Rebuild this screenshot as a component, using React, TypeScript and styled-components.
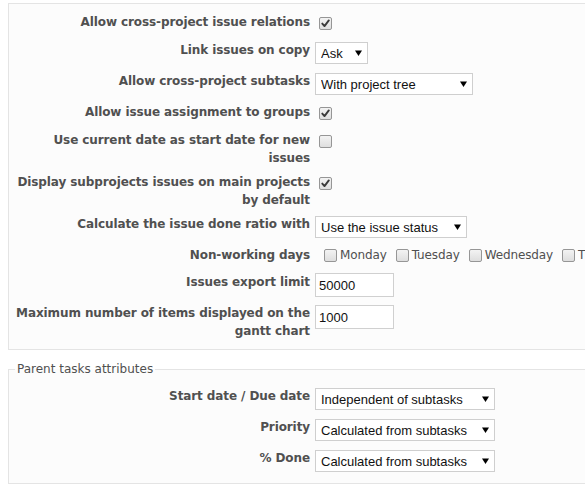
import React from "react";
import styled, { createGlobalStyle } from "styled-components";

const GlobalStyle = createGlobalStyle`
  html, body {
    margin: 0;
    padding: 0;
    background: #ffffff;
    overflow: hidden;
  }
  body {
    font-family: "DejaVu Sans", Verdana, sans-serif;
    font-size: 12px;
    color: #505050;
  }
`;

const Page = styled.div`
  padding: 3px 0 0 8px;
  width: 720px;
`;

const Box = styled.div`
  width: 640px;
  background: #fcfcfc;
  border: 1px solid #e4e4e4;
  padding: 6px;
  margin-bottom: 10px;
`;

const FieldBox = styled.fieldset`
  width: 640px;
  min-width: 0;
  margin: 0;
  padding: 6px;
  background: #fcfcfc;
  border: 1px solid #e4e4e4;
`;

const Legend = styled.legend`
  padding: 0 2px;
  font-size: 12px;
  line-height: 18px;
  color: #505050;
`;

const Row = styled.div<{ $h: number }>`
  display: grid;
  grid-template-columns: 295px auto;
  column-gap: 5px;
  align-items: start;
  padding: 3px 0;
  min-height: ${(p) => p.$h}px;
`;

const Label = styled.label`
  font-weight: bold;
  text-align: right;
  line-height: 18px;
  letter-spacing: -0.1px;
  color: #505050;
`;

const Field = styled.div<{ $offset: number }>`
  display: flex;
  align-items: center;
  padding-top: ${(p) => p.$offset}px;
`;

const CheckBox = styled.span<{ $ml: number }>`
  display: inline-flex;
  align-items: center;
  justify-content: center;
  box-sizing: border-box;
  width: 13px;
  height: 13px;
  margin-left: ${(p) => p.$ml}px;
  border: 1px solid #969696;
  border-radius: 2px;
  background: linear-gradient(#f3f3f3, #dedede);
  flex: none;
`;

const DayItem = styled.span`
  display: inline-flex;
  align-items: center;
  margin-left: 9px;
  white-space: nowrap;
`;

const DayText = styled.span`
  margin-left: 3px;
  line-height: 13px;
  letter-spacing: -0.12px;
  color: #505050;
`;

const SelectWrap = styled.span<{ $w: number }>`
  position: relative;
  display: inline-block;
  width: ${(p) => p.$w}px;
  height: 22px;
`;

const SelectEl = styled.select`
  appearance: none;
  -webkit-appearance: none;
  display: block;
  box-sizing: border-box;
  width: 100%;
  height: 100%;
  margin: 0;
  padding: 0 0 0 5px;
  border: 1px solid #cfcfcf;
  border-radius: 0;
  background: #ffffff;
  font-family: "Liberation Sans", Arial, sans-serif;
  font-size: 13px;
  color: #111111;
  outline: none;
`;

const Arrow = styled.svg`
  position: absolute;
  right: 6px;
  top: 50%;
  margin-top: -3px;
  pointer-events: none;
`;

const TextInput = styled.input`
  box-sizing: border-box;
  width: 79px;
  height: 24px;
  margin: 0;
  padding: 0 3px;
  border: 1px solid #d0d0d0;
  border-radius: 0;
  background: #ffffff;
  font-family: "Liberation Sans", Arial, sans-serif;
  font-size: 13px;
  color: #111111;
  outline: none;
`;

function Check({ checked, ml = 4 }: { checked?: boolean; ml?: number }) {
  return (
    <CheckBox $ml={ml}>
      {checked && (
        <svg width="9" height="9" viewBox="0 0 9 9">
          <path
            d="M1.3 4.6 L3.5 7.1 L7.8 1.4"
            fill="none"
            stroke="#3a3a3a"
            strokeWidth="1.9"
            strokeLinecap="round"
            strokeLinejoin="round"
          />
        </svg>
      )}
    </CheckBox>
  );
}

function Select({ value, width }: { value: string; width: number }) {
  return (
    <SelectWrap $w={width}>
      <SelectEl defaultValue={value}>
        <option value={value}>{value}</option>
      </SelectEl>
      <Arrow width="7" height="6" viewBox="0 0 7 6">
        <polygon points="0,0.5 7,0.5 3.5,6" fill="#000" />
      </Arrow>
    </SelectWrap>
  );
}

type Kind =
  | { type: "check"; checked: boolean }
  | { type: "select"; value: string; width: number }
  | { type: "days" }
  | { type: "input"; value: string };

interface RowDef {
  label: string;
  h: number;
  offset: number;
  kind: Kind;
}

const mainRows: RowDef[] = [
  { label: "Allow cross-project issue relations", h: 22, offset: 4, kind: { type: "check", checked: true } },
  { label: "Link issues on copy", h: 25, offset: 1, kind: { type: "select", value: "Ask", width: 53 } },
  { label: "Allow cross-project subtasks", h: 25, offset: 1, kind: { type: "select", value: "With project tree", width: 158 } },
  { label: "Allow issue assignment to groups", h: 22, offset: 4, kind: { type: "check", checked: true } },
  { label: "Use current date as start date for new issues", h: 36, offset: 4, kind: { type: "check", checked: false } },
  { label: "Display subprojects issues on main projects by default", h: 36, offset: 4, kind: { type: "check", checked: true } },
  { label: "Calculate the issue done ratio with", h: 25, offset: 1, kind: { type: "select", value: "Use the issue status", width: 152 } },
  { label: "Non-working days", h: 21, offset: 3, kind: { type: "days" } },
  { label: "Issues export limit", h: 25, offset: 0, kind: { type: "input", value: "50000" } },
  { label: "Maximum number of items displayed on the gantt chart", h: 36, offset: 1, kind: { type: "input", value: "1000" } },
];

const parentRows: RowDef[] = [
  { label: "Start date / Due date", h: 25, offset: 1, kind: { type: "select", value: "Independent of subtasks", width: 180 } },
  { label: "Priority", h: 25, offset: 1, kind: { type: "select", value: "Calculated from subtasks", width: 180 } },
  { label: "% Done", h: 25, offset: 1, kind: { type: "select", value: "Calculated from subtasks", width: 180 } },
];

const days = ["Monday", "Tuesday", "Wednesday", "Thursday", "Friday", "Saturday", "Sunday"];

function Control({ kind }: { kind: Kind }) {
  switch (kind.type) {
    case "check":
      return <Check checked={kind.checked} />;
    case "select":
      return <Select value={kind.value} width={kind.width} />;
    case "input":
      return <TextInput type="text" defaultValue={kind.value} />;
    case "days":
      return (
        <>
          {days.map((d) => (
            <DayItem key={d}>
              <Check ml={0} />
              <DayText>{d}</DayText>
            </DayItem>
          ))}
        </>
      );
  }
}

function SettingRow({ row }: { row: RowDef }) {
  return (
    <Row $h={row.h}>
      <Label>{row.label}</Label>
      <Field $offset={row.offset}>
        <Control kind={row.kind} />
      </Field>
    </Row>
  );
}

export default function App() {
  return (
    <>
      <GlobalStyle />
      <Page>
        <Box>
          {mainRows.map((r) => (
            <SettingRow key={r.label} row={r} />
          ))}
        </Box>
        <FieldBox>
          <Legend>Parent tasks attributes</Legend>
          {parentRows.map((r) => (
            <SettingRow key={r.label} row={r} />
          ))}
        </FieldBox>
      </Page>
    </>
  );
}
